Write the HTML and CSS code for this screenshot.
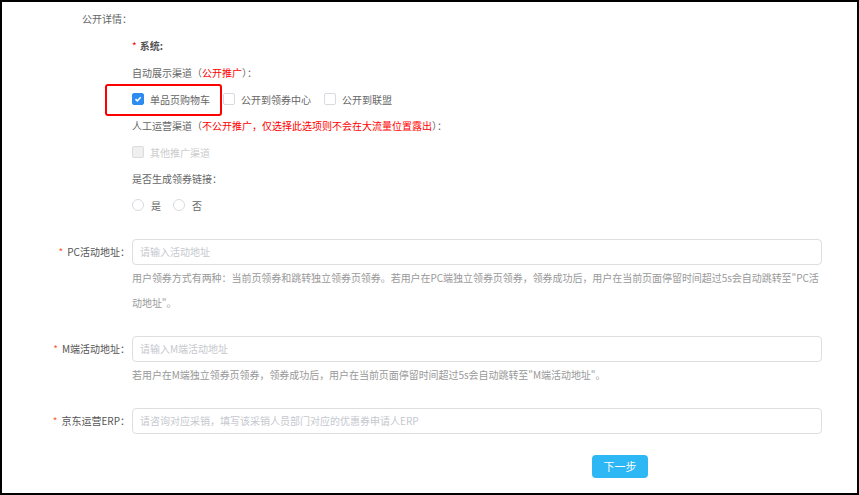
FILE: index.html
```html
<!DOCTYPE html>
<html lang="zh-CN">
<head>
    <meta charset="UTF-8" />
    <title>公开详情</title>
    <link rel="stylesheet" href="styles.css">
</head>
<body>
<div class="frame">

    <div class="detail-title">公开详情：</div>

    <div class="detail-body">
        <div class="line"><span class="req">*</span><strong>系统:</strong></div>
        <div class="line">自动展示渠道（<span class="red">公开推广</span>）：</div>

        <div class="line options">
            <span class="mark-box"></span>
            <label class="check"><span class="box checked"><svg viewBox="0 0 12 12"><path d="M3 6.2 L5.2 8.3 L9.2 3.9" /></svg></span>单品页购物车</label>
            <label class="check"><span class="box"></span>公开到领券中心</label>
            <label class="check"><span class="box"></span>公开到联盟</label>
        </div>

        <div class="line">人工运营渠道（<span class="red">不公开推广，仅选择此选项则不会在大流量位置露出</span>）：</div>
        <div class="line">
            <label class="check disabled"><span class="box"></span>其他推广渠道</label>
        </div>
        <div class="line">是否生成领券链接：</div>
        <div class="line options">
            <label class="radio"><span class="circle"></span>是</label>
            <label class="radio"><span class="circle"></span>否</label>
        </div>
    </div>

    <div class="form">
        <div class="form-item">
            <div class="form-label"><span class="star">*</span>PC活动地址：</div>
            <div class="form-field">
                <input class="input" type="text" placeholder="请输入活动地址">
                <p class="help">用户领券方式有两种：当前页领券和跳转独立领券页领券。若用户在PC端独立领券页领券，领券成功后，用户在当前页面停留时间超过5s会自动跳转至"PC活动地址"。</p>
            </div>
        </div>

        <div class="form-item">
            <div class="form-label"><span class="star">*</span>M端活动地址：</div>
            <div class="form-field">
                <input class="input" type="text" placeholder="请输入M端活动地址">
                <p class="help">若用户在M端独立领券页领券，领券成功后，用户在当前页面停留时间超过5s会自动跳转至"M端活动地址"。</p>
            </div>
        </div>

        <div class="form-item">
            <div class="form-label"><span class="star">*</span>京东运营ERP：</div>
            <div class="form-field">
                <input class="input" type="text" placeholder="请咨询对应采销，填写该采销人员部门对应的优惠券申请人ERP">
            </div>
        </div>

        <div class="actions">
            <button class="btn-next">下一步</button>
        </div>
    </div>

</div>
</body>
</html>
```

FILE: styles.css
```css
body {
    margin: 0;
    font-family: "Noto Sans CJK SC", "Liberation Sans", sans-serif;
    font-size: 10px;
    color: #666;
    background: #fff;
}

.frame {
    width: 859px;
    height: 495px;
    box-sizing: border-box;
    border: 2px solid #000;
    padding-top: 4px;
    overflow: hidden;
}

.detail-title {
    padding-left: 80px;
    line-height: 26.6px;
}

.detail-body {
    padding-left: 130px;
}

.line {
    height: 26.6px;
    display: flex;
    align-items: center;
    white-space: nowrap;
}

.line strong {
    color: #555;
}

.req {
    color: #f00;
    margin-right: 3px;
}

.red {
    color: #f00;
}

.options {
    position: relative;
}

/* red annotation frame around the first option */
.mark-box {
    position: absolute;
    left: -27px;
    top: -2px;
    width: 113px;
    height: 28px;
    border: 2px solid #f00;
    border-radius: 3px;
}

.check,
.radio {
    display: inline-flex;
    align-items: center;
    margin-right: 13px;
}

.box {
    width: 10px;
    height: 10px;
    border: 1px solid #d7dbe0;
    border-radius: 2px;
    background: #fff;
    margin-right: 6px;
    display: inline-flex;
}

    .box.checked {
        background: #2d8cf0;
        border-color: #2d8cf0;
    }

    .box svg {
        width: 10px;
        height: 10px;
        fill: none;
        stroke: #fff;
        stroke-width: 1.8;
    }

.check.disabled {
    color: #ccc;
}

    .check.disabled .box {
        background: #f0f0f0;
        border-color: #dcdcdc;
    }

.radio {
    margin-right: 12px;
}

.circle {
    width: 10px;
    height: 10px;
    border: 1px solid #d7dbe0;
    border-radius: 50%;
    margin-right: 7px;
}

.form {
    margin-top: 20px;
}

.form-item {
    display: grid;
    grid-template-columns: 128px 690px;
    column-gap: 2px;
    margin-bottom: 21px;
}

.form-label {
    text-align: right;
    line-height: 26px;
    color: #555;
}

.star {
    color: #f5622d;
    margin-right: 4px;
}

.input {
    display: block;
    width: 100%;
    height: 26px;
    box-sizing: border-box;
    border: 1px solid #dcdee2;
    border-radius: 4px;
    padding: 0 7px;
    font-family: inherit;
    font-size: 10px;
    color: #666;
    outline: none;
}

    .input::placeholder {
        color: #c5c8ce;
    }

.help {
    margin: 0;
    line-height: 25px;
    color: #999;
    letter-spacing: -0.05px;
    padding-right: 3px;
}

.actions {
    padding-left: 590px;
    margin-top: 2px;
}

.btn-next {
    width: 56px;
    height: 23px;
    border: none;
    border-radius: 4px;
    background: #2db7f5;
    color: #fff;
    font-family: inherit;
    font-size: 11px;
    cursor: pointer;
}
```
